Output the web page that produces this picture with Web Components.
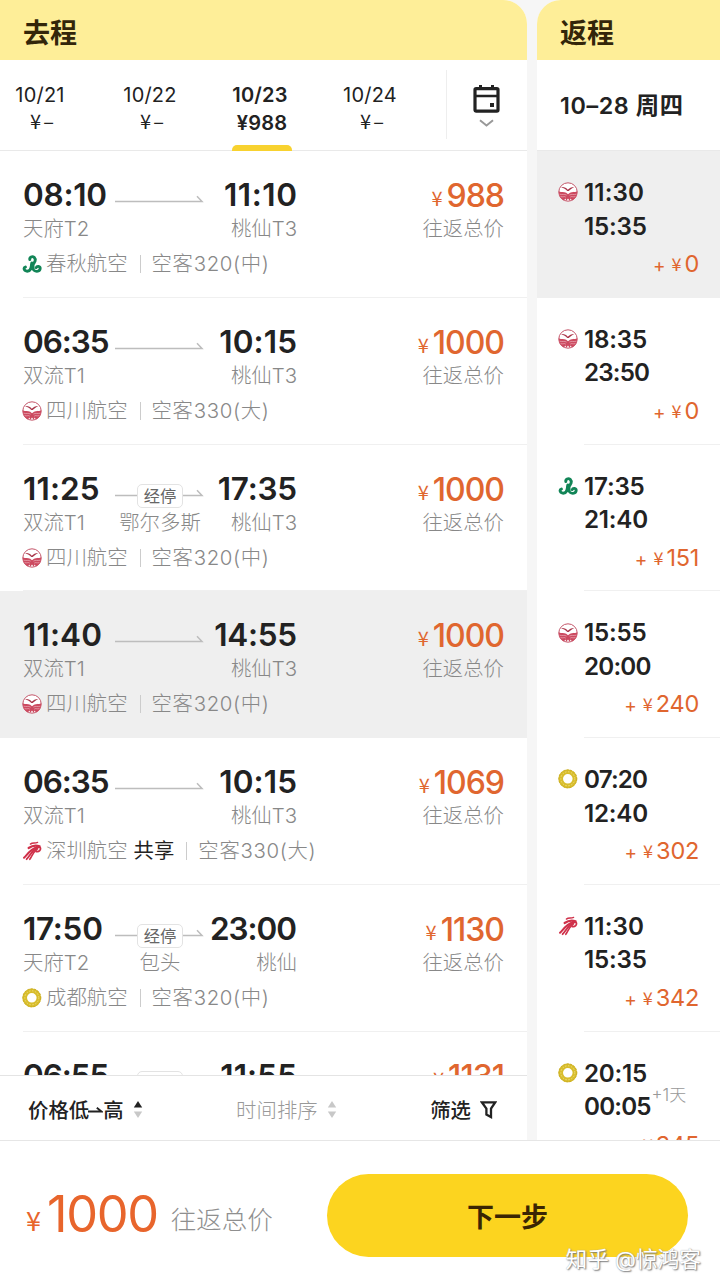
<!DOCTYPE html>
<html lang="zh-CN">
<head>
<meta charset="UTF-8">
<meta name="viewport" content="width=device-width, initial-scale=1">
<title>选择航班</title>
<style>
  html, body { margin: 0; height: 100%; }
  body {
    font-family: Inter, "Noto Sans CJK SC", sans-serif;
    color: #222;
    background: #fff;
    overflow: hidden;
  }
</style>
</head>
<body>
<flight-app></flight-app>

<script>
const logos = {
  spring: `
    <g fill="none" stroke="#128557" stroke-width="2.9" stroke-linecap="round">
      <path d="M9.6 11.6C13.4 8.6 14.2 5.4 12.2 3.4C10.2 1.7 7.4 3.2 7.8 5.6"/>
      <path d="M9.8 9C10.2 13.6 8.6 17 5.2 17.2C2 17.2 1.2 13.8 3.4 13"/>
      <path d="M9.6 12C10.4 15.6 13 17.8 15.8 17.2C18.8 16.4 18.9 12.8 16.4 12.4C15 12.3 14.4 13 14.2 13.6"/>
    </g>
    <path d="M8.4 9.4L12.4 9L12.6 15L7.2 15.4Z" fill="#128557"/>`,
  sichuan: `
    <circle cx="10" cy="10" r="9.2" fill="#fff" stroke="#c4566a" stroke-width="1"/>
    <path d="M.8 9.2C3.4 10.8 6 9.4 8.2 10.8L10 12.2L12 10.8C14.4 9.4 16.4 10.8 19.2 9.2A9.3 9.3 0 0 1 14 18.4L12.6 16.4L11.6 18.8L10 16.6L8.4 18.8L7.4 16.4L6 18.4A9.3 9.3 0 0 1 .8 9.2Z" fill="#cc4a60"/>
    <path d="M3.2 5.2C6.2 4.8 8.2 6 9.8 7.8C11.4 5.8 13.5 4.8 16.2 4.9C13.8 6.2 12.3 7.4 10.7 9L9.3 9.1C7.7 7.2 5.9 6 3.2 5.2Z" fill="#a83448"/>
    <g fill="none" stroke="#f6d5da" stroke-width=".5">
      <path d="M1.6 12.2C4.4 13.2 6.4 11.6 8.6 13.1M2.6 14.6C5 15.4 6.6 13.8 7.8 15.2M18.4 12.2C15.6 13.2 13.6 11.6 11.4 13.1M17.4 14.6C15 15.4 13.4 13.8 12.2 15.2"/>
    </g>`,
  shenzhen: `
    <g fill="none" stroke="#cf3049" stroke-linecap="round">
      <path d="M8.4 3.1C10.6 1.4 12.8 2.6 15.6 1.4" stroke-width="1.4"/>
      <path d="M6.6 7C10 4.8 13.4 3.8 17.6 5.4" stroke-width="2.2"/>
      <path d="M2 16.8C5.4 13.4 8 8.7 15.6 5.8" stroke-width="2"/>
      <path d="M4.6 18.2C7.8 14.8 9.4 10.6 14.6 7.2" stroke-width="1.8"/>
      <path d="M7.8 18.3C10.1 15 10.8 11.5 14.8 8.6" stroke-width="1.6"/>
      <path d="M14.4 10.6C17 11.2 19.2 9 18.2 6.6C17.2 5.5 15.2 6.3 15.4 7.9" stroke-width="1.8"/>
    </g>`,
  chengdu: `
    <circle cx="9.8" cy="9.8" r="7.1" fill="none" stroke="#d8bd2c" stroke-width="4.6"/>
    <circle cx="9.8" cy="9.8" r="7" fill="none" stroke="#eedd7c" stroke-width="1" stroke-dasharray="1.4 1.6"/>
    <circle cx="9.8" cy="9.8" r="9" fill="none" stroke="#c6a91f" stroke-width=".8" stroke-dasharray="2.4 1"/>`
};

const outbound = [
  { dep: '08:10', arr: '11:10', from: '天府T2', to: '桃仙T3', price: '988', logo: 'spring', airline: '春秋航空', plane: '空客320(中)' },
  { dep: '06:35', arr: '10:15', from: '双流T1', to: '桃仙T3', price: '1000', logo: 'sichuan', airline: '四川航空', plane: '空客330(大)' },
  { dep: '11:25', arr: '17:35', from: '双流T1', to: '桃仙T3', stop: '鄂尔多斯', price: '1000', logo: 'sichuan', airline: '四川航空', plane: '空客320(中)' },
  { dep: '11:40', arr: '14:55', from: '双流T1', to: '桃仙T3', price: '1000', logo: 'sichuan', airline: '四川航空', plane: '空客320(中)', selected: true },
  { dep: '06:35', arr: '10:15', from: '双流T1', to: '桃仙T3', price: '1069', logo: 'shenzhen', airline: '深圳航空', shared: true, plane: '空客330(大)' },
  { dep: '17:50', arr: '23:00', from: '天府T2', to: '桃仙', stop: '包头', price: '1130', logo: 'chengdu', airline: '成都航空', plane: '空客320(中)' },
  { dep: '06:55', arr: '11:55', stop: ' ', price: '1131' }
];

const inbound = [
  { dep: '11:30', arr: '15:35', diff: '0', logo: 'sichuan', selected: true },
  { dep: '18:35', arr: '23:50', diff: '0', logo: 'sichuan' },
  { dep: '17:35', arr: '21:40', diff: '151', logo: 'spring' },
  { dep: '15:55', arr: '20:00', diff: '240', logo: 'sichuan' },
  { dep: '07:20', arr: '12:40', diff: '302', logo: 'chengdu' },
  { dep: '11:30', arr: '15:35', diff: '342', logo: 'shenzhen' },
  { dep: '20:15', arr: '00:05', diff: '345', logo: 'chengdu', nextDay: true }
];

class BaseElement extends HTMLElement {
  constructor() {
    super();
    this.attachShadow({ mode: 'open' });
  }

  connectedCallback() {
    this.shadowRoot.innerHTML = this.render();
  }
}

class AirlineLogo extends BaseElement {
  render() {
    return `
      <style>
        :host { display: block; width: 20px; height: 20px; flex: none; }
        svg { display: block; }
      </style>
      <svg width="20" height="20" viewBox="0 0 20 20">${logos[this.getAttribute('name')] || ''}</svg>
    `;
  }
}
customElements.define('airline-logo', AirlineLogo);

// The narrow "1" leaves gaps, so tracking depends on how many there are
class ClockTime extends BaseElement {
  render() {
    const text = this.textContent;
    const ones = text.split('1').length - 1;
    const tracking = [-0.034, -0.009, 0.004, 0.018][ones];
    return `
      <style>
        :host { display: inline-block; white-space: nowrap; letter-spacing: ${tracking}em; }
        span { margin-right: ${-tracking}em; }
      </style>
      <span><slot></slot></span>
    `;
  }
}
customElements.define('clock-time', ClockTime);

class FarePrice extends BaseElement {
  render() {
    return `
      <style>
        :host {
          display: flex;
          align-items: baseline;
          color: #e0662f;
          white-space: nowrap;
          font-size: 32px;
          line-height: 37px;
          font-weight: 500;
        }
        .yen {
          font-family: "Noto Sans CJK SC", sans-serif;
          font-size: var(--yen-size, 20px);
          font-weight: 400;
          line-height: 1;
          margin-right: var(--yen-gap, 4px);
          position: relative;
          top: -1px;
        }
        .plus { font-size: 19px; font-weight: 400; line-height: 1; margin-right: 6px; }
        .num { letter-spacing: var(--num-spacing, -1px); margin-right: calc(0px + var(--num-spacing, -1px) + var(--num-pull, 1px)); }
      </style>
      ${this.hasAttribute('plus') ? '<span class="plus">+</span>' : ''}
      <span class="yen">¥</span><span class="num"><slot></slot></span>
    `;
  }
}
customElements.define('fare-price', FarePrice);

class RouteArrow extends BaseElement {
  render() {
    return `
      <style>
        :host { display: block; position: relative; width: 88px; height: 36px; }
        svg { display: block; margin-left: -1px; }
        /* badge lies over the line */
        .tag {
          position: absolute;
          top: 13px;
          left: 21px;
          width: 46px;
          height: 24px;
          box-sizing: border-box;
          border: 1px solid #e3e3e3;
          border-radius: 5px;
          background: #fff;
          color: #666;
          font-size: 16.3px;
          line-height: 22px;
          text-align: center;
        }
      </style>
      <svg width="89" height="36" viewBox="0 0 89 36">
        <path d="M0 24.5H87L82 19.2" fill="none" stroke="#bdbdbd" stroke-width="1.5"/>
      </svg>
      ${this.hasAttribute('stop') ? '<div class="tag">经停</div>' : ''}
    `;
  }
}
customElements.define('route-arrow', RouteArrow);

class FlightRow extends BaseElement {
  render() {
    const f = this.flight;
    return `
      <style>
        :host {
          display: block;
          box-sizing: border-box;
          height: 146.8px;
          flex: none;
          padding: 26px 23px 0;
          background: ${f.selected ? '#efefef' : '#fff'};
          position: relative;
        }
        .line {
          position: absolute;
          left: 23px; right: 0; bottom: 0;
          border-bottom: 1px solid ${f.selected ? 'transparent' : '#f0f0f0'};
        }
        .main { display: flex; justify-content: space-between; }
        .route {
          display: grid;
          grid-template-columns: 1fr 88px 1fr;
          row-gap: 4px;
          width: 274px;
        }
        clock-time {
          font-size: 31.5px;
          font-weight: 600;
          line-height: 36px;
          height: 36px;
          justify-self: start;
        }
        .sub, .total, .info {
          font-size: 20.4px;
          line-height: 24px;
          color: #888;
          font-weight: 300;
          white-space: nowrap;
        }
        .sub { height: 24px; }
        clock-time.end, .end { justify-self: end; }
        .mid { justify-self: center; }
        .fare { display: flex; flex-direction: column; align-items: flex-end; gap: 4px; }
        .fare fare-price { height: 36px; }
        .info { display: flex; align-items: center; margin-top: 11px; }
        .info airline-logo { margin: 0 4px 0 -1px; }
        .shared { color: #222; font-weight: 400; margin-left: 6px; }
        .plane { letter-spacing: .65px; }
        .sep { width: 1px; height: 18px; background: #ccc; margin: 0 11px 0 12px; }
      </style>
      <div class="main">
        <div class="route">
          <clock-time>${f.dep}</clock-time>
          <route-arrow ${f.stop ? 'stop' : ''}></route-arrow>
          <clock-time class="end">${f.arr}</clock-time>
          <span class="sub">${f.from || ''}</span>
          <span class="sub mid">${f.stop || ''}</span>
          <span class="sub end">${f.to || ''}</span>
        </div>
        <div class="fare">
          <fare-price>${f.price}</fare-price>
          ${f.from ? '<span class="total">往返总价</span>' : ''}
        </div>
      </div>
      ${f.airline ? `
      <div class="info">
        <airline-logo name="${f.logo}"></airline-logo>
        <span>${f.airline}</span>
        ${f.shared ? '<span class="shared">共享</span>' : ''}
        <i class="sep"></i>
        <span class="plane">${f.plane}</span>
      </div>` : ''}
      <div class="line"></div>
    `;
  }
}
customElements.define('flight-row', FlightRow);

class ReturnRow extends BaseElement {
  render() {
    const f = this.flight;
    return `
      <style>
        :host {
          display: block;
          box-sizing: border-box;
          height: 146.8px;
          flex: none;
          padding: 25px 21px 0 22px;
          background: ${f.selected ? '#efefef' : '#fff'};
          position: relative;
        }
        .line {
          position: absolute;
          left: 47px; right: 0; bottom: 0;
          border-bottom: 1px solid ${f.selected ? 'transparent' : '#f0f0f0'};
        }
        .times {
          display: grid;
          grid-template-columns: 20px auto;
          column-gap: 5px;
          font-size: 24.2px;
          font-weight: 600;
          line-height: 33.5px;
        }
        airline-logo { align-self: center; margin: -1px 0 0 -1px; }
        .arr { grid-column: 2; white-space: nowrap; }
        .arr small {
          position: absolute;
          margin-top: -11px;
          font-size: 17px;
          font-weight: 300;
          color: #999;
        }
        fare-price {
          justify-content: flex-end;
          margin-top: 3px;
          font-size: 23.5px;
          line-height: 36px;
          font-weight: 400;
          --yen-size: 18px;
          --yen-gap: 3px;
          --num-spacing: -0.2px;
          --num-pull: 0px;
        }
      </style>
      <div class="times">
        <airline-logo name="${f.logo}"></airline-logo>
        <clock-time>${f.dep}</clock-time>
        <span class="arr"><clock-time>${f.arr}</clock-time>${f.nextDay ? '<small>+1天</small>' : ''}</span>
      </div>
      <fare-price plus>${f.diff}</fare-price>
      <div class="line"></div>
    `;
  }
}
customElements.define('return-row', ReturnRow);

class DateTab extends BaseElement {
  render() {
    const active = this.hasAttribute('active');
    return `
      <style>
        :host {
          display: flex;
          flex-direction: column;
          align-items: center;
          box-sizing: border-box;
          width: 110px;
          flex: none;
          padding-top: 21px;
          font-size: 20px;
          line-height: 28px;
          letter-spacing: .2px;
          font-weight: ${active ? 600 : 400};
        }
        .price { height: 28px; padding-left: 4px; }
        .none { display: block; margin-top: -2px; padding-left: 2px; letter-spacing: 2px; font-family: "Noto Sans CJK SC", sans-serif; }
        .bar { width: 60px; height: 6px; margin: auto 0 0 4px; border-radius: 5px 5px 0 0; background: ${active ? '#f8d22f' : 'none'}; }
      </style>
      <span><slot></slot></span>
      <span class="price"><slot name="price"><span class="none">¥–</span></slot></span>
      <i class="bar"></i>
    `;
  }
}
customElements.define('date-tab', DateTab);

class TripColumn extends BaseElement {
  render() {
    return `
      <style>
        :host { display: flex; flex-direction: column; min-width: 0; min-height: 0; background: #fff; border-radius: 24px 24px 0 0; overflow: hidden; }
        header {
          flex: none;
          height: 60px;
          padding: 6px 23px 0;
          box-sizing: border-box;
          background: #feee98;
          color: #33260a;
          font-size: 27px;
          line-height: 56px;
          font-weight: 700;
        }
        .dates { flex: none; height: 91px; box-sizing: border-box; border-bottom: 1px solid #e9e9e9; }
        .list { flex: 1; min-height: 0; overflow: hidden; display: flex; flex-direction: column; }
      </style>
      <header>${this.getAttribute('label')}</header>
      <div class="dates"><slot name="dates"></slot></div>
      <div class="list"><slot></slot></div>
      <slot name="footer"></slot>
    `;
  }
}
customElements.define('trip-column', TripColumn);

class DateStrip extends BaseElement {
  render() {
    return `
      <style>
        :host { display: flex; height: 91px; overflow: hidden; }
        .tabs { display: flex; width: 446px; overflow: hidden; }
        .tabs date-tab:first-child { margin-left: -15px; }
        .cal { flex: 1; margin: 10px 0 12px; border-left: 1px solid #eee; display: flex; flex-direction: column; align-items: center; padding: 14px 2px 0 0; }
        .cal svg { display: block; }
        .chev { margin-top: 6px; }
      </style>
      <div class="tabs">
        <date-tab>10/21</date-tab>
        <date-tab>10/22</date-tab>
        <date-tab active>10/23<span slot="price">¥988</span></date-tab>
        <date-tab>10/24</date-tab>
      </div>
      <div class="cal">
        <svg width="27" height="29" viewBox="0 0 27 29">
          <path d="M7.5 1V6M19.5 1V6" stroke="#222" stroke-width="3"/>
          <rect x="2" y="4.6" width="23" height="22.6" rx="1.2" fill="none" stroke="#222" stroke-width="3.2"/>
          <path d="M2 12H25" stroke="#222" stroke-width="2.4"/>
          <rect x="17" y="19" width="4" height="4" fill="#222"/>
        </svg>
        <svg class="chev" width="15" height="8" viewBox="0 0 15 8">
          <path d="M1 1.2L7.5 6.5L14 1.2" fill="none" stroke="#999" stroke-width="2"/>
        </svg>
      </div>
    `;
  }
}
customElements.define('date-strip', DateStrip);

class SortBar extends BaseElement {
  render() {
    const carets = (up, down) => `
      <svg class="carets" width="10" height="17" viewBox="0 0 10 17">
        <path d="M5 0L9.2 6.5H.8Z" fill="${up}"/><path d="M5 17L9.2 10.5H.8Z" fill="${down}"/>
      </svg>`;
    return `
      <style>
        :host {
          display: flex;
          align-items: center;
          justify-content: space-between;
          flex: none;
          box-sizing: border-box;
          height: 65px;
          padding: 6px 30px 0 28px;
          border-top: 1px solid #e4e4e4;
          font-size: 20.4px;
          line-height: 28px;
          font-weight: 500;
          background: #fff;
        }
        div { display: flex; align-items: center; white-space: nowrap; }
        .time { color: #999; font-weight: 300; }
        .carets, .funnel { margin: -3px 0 0 9px; }
        .harpoon { margin: -2px 0 0 -1px; }
      </style>
      <div>价格低<svg class="harpoon" width="15" height="8" viewBox="0 0 15 8"><path d="M0 5.5H13.6L8.8 1.8" fill="none" stroke="#222" stroke-width="1.9"/></svg>高${carets('#222', '#c8c8c8')}</div>
      <div class="time">时间排序${carets('#c8c8c8', '#c8c8c8')}</div>
      <div>筛选
        <svg class="funnel" width="17" height="18" viewBox="0 0 17 18">
          <path d="M1.8 1.3H15.2L11 7.6V16L6.4 13.6V7.6Z" fill="none" stroke="#222" stroke-width="2.3"/>
        </svg>
      </div>
    `;
  }
}
customElements.define('sort-bar', SortBar);

class CheckoutBar extends BaseElement {
  render() {
    return `
      <style>
        :host {
          display: flex;
          align-items: flex-start;
          box-sizing: border-box;
          flex: none;
          height: 148px;
          padding: 33px 32px 0 26px;
          border-top: 1px solid #e6e6e6;
          background: #fff;
          position: relative;
        }
        .sum { display: flex; align-items: baseline; flex: 1; margin-top: 7px; }
        fare-price {
          font-size: 50.5px;
          font-weight: 400;
          line-height: 66px;
          color: #e8652c;
          --yen-size: 27px;
          --yen-gap: 6px;
          --num-spacing: -1.3px;
        }
        .label { margin: 0 0 3px 13px; font-size: 25.5px; font-weight: 300; color: #8f8f8f; white-space: nowrap; transform: translateY(-3px); }
        button {
          width: 361px;
          height: 83px;
          border: 0;
          padding: 0;
          border-radius: 42px;
          background: #fcd41f;
          color: #3a2503;
          font: inherit;
          font-size: 27px;
          font-weight: 600;
        }
        .mark {
          position: absolute;
          right: 19px;
          bottom: 12px;
          font-size: 21.7px;
          line-height: 34px;
          color: #fff;
          text-shadow: 1px 1px 1.5px #777, 0 0 1px #aaa;
          white-space: nowrap;
        }
      </style>
      <div class="sum">
        <fare-price>1000</fare-price>
        <span class="label">往返总价</span>
      </div>
      <button>下一步</button>
      <div class="mark">知乎 @惊鸿客</div>
    `;
  }
}
customElements.define('checkout-bar', CheckoutBar);

class FlightApp extends BaseElement {
  connectedCallback() {
    super.connectedCallback();
    this.fill('.out', 'flight-row', outbound);
    this.fill('.back', 'return-row', inbound);
  }

  fill(selector, tag, flights) {
    const column = this.shadowRoot.querySelector(selector);
    flights.forEach((flight) => {
      const row = document.createElement(tag);
      row.flight = flight;
      column.appendChild(row);
    });
  }

  render() {
    return `
      <style>
        :host { display: flex; flex-direction: column; width: 720px; height: 1288px; overflow: hidden; }
        .columns { flex: 1; min-height: 0; display: grid; grid-template-columns: 527px 183px; grid-template-rows: 100%; gap: 10px; background: #f6f6f6; }
        .out { border-top-left-radius: 0; }
        .back { border-top-right-radius: 0; }
        .day { display: block; padding: 2px 0 0 23px; font-size: 23.3px; letter-spacing: .6px; line-height: 87px; font-weight: 600; white-space: nowrap; }
      </style>
      <div class="columns">
        <trip-column class="out" label="去程">
          <date-strip slot="dates"></date-strip>
          <sort-bar slot="footer"></sort-bar>
        </trip-column>
        <trip-column class="back" label="返程">
          <span class="day" slot="dates">10–28 周四</span>
        </trip-column>
      </div>
      <checkout-bar></checkout-bar>
    `;
  }
}
customElements.define('flight-app', FlightApp);
</script>
</body>
</html>
